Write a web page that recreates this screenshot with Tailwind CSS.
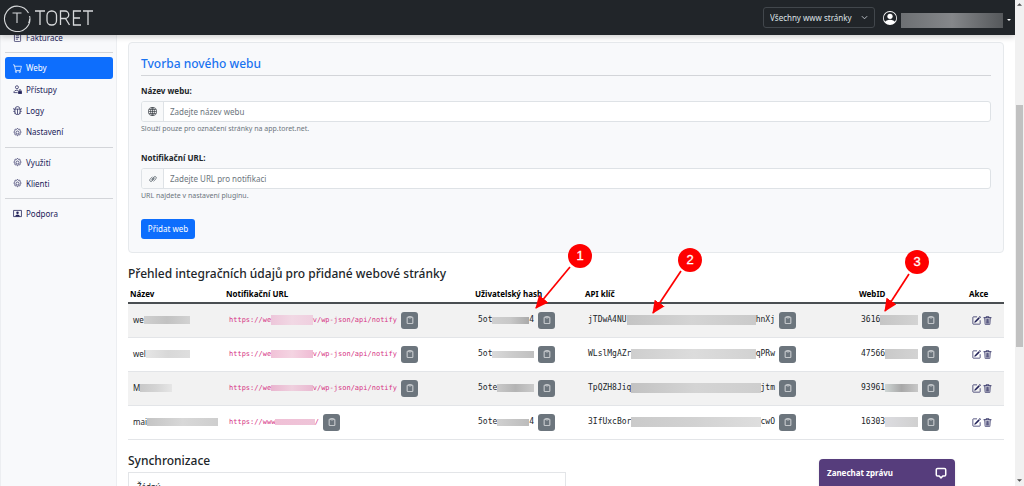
<!DOCTYPE html>
<html lang="cs">
<head>
<meta charset="utf-8">
<title>Toret – Weby</title>
<script src="https://cdn.jsdelivr.net/npm/@tailwindcss/browser@4"></script>
</head>
<body class="relative h-screen overflow-hidden bg-white font-['Noto_Sans','Open_Sans',sans-serif] text-[8px] leading-3 text-[#212529]">

<!-- Icon sprite -->
<svg class="hidden" aria-hidden="true">
  <symbol id="i-clip" viewBox="0 0 16 16"><path fill="none" stroke="currentColor" stroke-width="1.400" d="M4.500 2.300H3.300a1 1 0 0 0-1 1v11a1 1 0 0 0 1 1h9.400a1 1 0 0 0 1-1v-11a1 1 0 0 0-1-1h-1.200"/><rect x="5.200" y=".7" width="5.600" height="3" rx="1" fill="none" stroke="currentColor" stroke-width="1.400"/></symbol>
  <symbol id="i-edit" viewBox="0 0 16 16"><path fill="currentColor" d="M15.502 1.940a.5.5 0 0 1 0 .706L14.459 3.690l-2-2L13.502.646a.5.5 0 0 1 .707 0zm-1.750 2.456-2-2L4.939 9.210a.5.5 0 0 0-.121.196l-.805 2.414a.25.25 0 0 0 .316.316l2.414-.805a.5.5 0 0 0 .196-.120z"/><path fill="none" stroke="currentColor" stroke-width="1.300" d="M14.500 7.500v6a1 1 0 0 1-1 1h-11a1 1 0 0 1-1-1v-11a1 1 0 0 1 1-1H9"/></symbol>
  <symbol id="i-trash" viewBox="0 0 16 16"><path fill="none" stroke="currentColor" stroke-width="1.3" stroke-linecap="round" d="M1.500 3h13M5.500 3V1.200h5V3M3 3.200l.8 11.300c0 .5.400.9.900.9h6.600c.5 0 .9-.4.900-.9L13 3.200M5.700 5.500l.4 7.500M8 5.500V13M10.300 5.500 9.900 13"/></symbol>
  <symbol id="i-gear" viewBox="0 0 16 16"><g fill="none" stroke="currentColor" stroke-width="1.200"><circle cx="8" cy="8" r="2.700"/><path d="M6.900 1.500c.3-1.100 1.900-1.100 2.200 0l.1.400c.2.700 1 1 1.600.7l.4-.2c1-.5 2.100.6 1.600 1.600l-.2.4c-.3.600 0 1.400.7 1.600l.4.100c1.100.3 1.100 1.900 0 2.200l-.4.100c-.7.2-1 1-.7 1.600l.2.400c.5 1-.6 2.100-1.600 1.600l-.4-.2c-.6-.3-1.400 0-1.600.7l-.1.400c-.3 1.100-1.900 1.100-2.200 0l-.1-.4c-.2-.7-1-1-1.600-.7l-.4.200c-1 .5-2.100-.6-1.600-1.600l.2-.4c.3-.6 0-1.400-.7-1.600l-.4-.1c-1.100-.3-1.100-1.900 0-2.200l.4-.1c.7-.2 1-1 .7-1.600l-.2-.4c-.5-1 .6-2.100 1.600-1.600l.4.200c.6.300 1.400 0 1.600-.7z"/></g></symbol>
</svg>

<!-- Top bar -->
<header class="absolute left-0 right-[9px] top-0 z-20 flex h-[35px] items-center bg-[#212529] pl-[3px] shadow-[0_2px_6px_rgba(0,0,0,0.2)]">
  <a href="#" class="flex items-center gap-1" aria-label="Toret">
    <svg class="size-7" viewBox="0 0 28 28" fill="none" stroke="#d7d9db" stroke-width="1.1"><path d="M25.500 9A12.700 12.700 0 1 0 26.600 12M26.700 15A12.700 12.700 0 0 1 25.600 19"/><path d="M9.500 9h9M14 9v10"/></svg>
    <svg class="h-4 w-[60px]" viewBox="0 0 60 16" fill="none" stroke="#d7d9db" stroke-width="1.300"><path d="M0 1h10M5 1v14"/><rect x="12" y="1" width="9.500" height="14" rx="4.500"/><path d="M25.500 15V1h4.500a3.700 3.700 0 0 1 0 7.500h-4.500M30.500 8.500 34.500 15"/><path d="M46 1h-7.500v14H46M38.500 8H45"/><path d="M48 1h10M53 1v14"/></svg>
  </a>
  <div class="relative ml-auto mr-2 h-[21px] w-[112px]">
    <select aria-label="Výběr stránky" class="h-full w-full appearance-none rounded-[3px] border border-[#42474c] bg-[#212529] pl-1.5 text-[8px] text-[#dee2e6]"><option>Všechny www stránky</option></select>
    <svg class="pointer-events-none absolute right-[7px] top-[7px] size-[7px]" viewBox="0 0 16 16" fill="none" stroke="#ced4da" stroke-width="2"><path d="m2 5 6 6 6-6"/></svg>
  </div>
  <button class="flex items-center gap-1 pr-1" aria-label="Uživatel">
    <svg class="size-[14px]" viewBox="0 0 16 16" fill="#fff"><path d="M11 6a3 3 0 1 1-6 0 3 3 0 0 1 6 0"/><path fill-rule="evenodd" d="M0 8a8 8 0 1 1 16 0A8 8 0 0 1 0 8m8-7a7 7 0 0 0-5.468 11.370C3.242 11.226 4.805 10 8 10s4.757 1.225 5.468 2.370A7 7 0 0 0 8 1"/></svg>
    <span class="mt-1.5 h-[15px] w-[102px] bg-linear-to-r from-[#6d7073] via-[#85878a] to-[#55585b]"></span>
    <svg class="mt-1 h-[2px] w-[4px]" viewBox="0 0 6 3" fill="#fff"><path d="M0 0h6L3 3z"/></svg>
  </button>
</header>

<!-- Browser scrollbar -->
<div class="absolute inset-y-0 right-0 z-20 flex w-[9px] flex-col items-center bg-[#f1f1f1]">
  <svg class="mt-[3px] h-[3px] w-[5px]" viewBox="0 0 6 3" fill="#505050"><path d="M0 3h6L3 0z"/></svg>
  <div class="mt-[99px] h-[242px] w-[7px] bg-[#c1c1c1]"></div>
  <svg class="mb-1 mt-auto h-[3px] w-[5px]" viewBox="0 0 6 3" fill="#505050"><path d="M0 0h6L3 3z"/></svg>
</div>

<div class="flex h-full pr-5 pt-[27px]">
  <!-- Sidebar -->
  <nav class="flex w-[117px] shrink-0 flex-col border-x border-[#eceef1] bg-[#f8f9fb] pl-1 pr-[3px] text-[#212158]">
    <a href="#" class="flex h-[21px] items-center gap-1 pl-2"><svg class="size-[9px]" viewBox="0 0 16 16" fill="none" stroke="currentColor" stroke-width="1.300"><rect x="2.500" y=".7" width="11" height="14.600" rx="1.500"/><path d="M5 5h6M5 8h6M5 11h4"/></svg>Fakturace</a>
    <hr class="my-1 border-[#d3d5d9]">
    <a href="#" class="flex h-[22px] items-center gap-1 rounded-[3px] bg-[#0d6efd] pl-2 text-white"><svg class="size-[9px]" viewBox="0 0 16 16" fill="none" stroke="currentColor" stroke-width="1.300"><path d="M0 1.500h2.300L4.500 11.500h8.700L15 4H3"/><circle cx="5.500" cy="13.800" r="1.300"/><circle cx="12" cy="13.800" r="1.300"/></svg>Weby</a>
    <a href="#" class="flex h-[21px] items-center gap-1 pl-2"><svg class="size-[9px]" viewBox="0 0 16 16" fill="none" stroke="currentColor" stroke-width="1.300"><circle cx="7" cy="4" r="2.700"/><path d="M9 9.500C4 8.500 1.500 11 1.500 13.500H8"/><rect x="9.500" y="11" width="6" height="4.500" rx="1" fill="currentColor"/><path d="M11 11V9.500a1.500 1.500 0 0 1 3 0V11"/></svg>Přístupy</a>
    <a href="#" class="flex h-[21px] items-center gap-1 pl-2"><svg class="size-[9px]" viewBox="0 0 16 16" fill="none" stroke="currentColor" stroke-width="1.300"><path d="M3.500 5.500h9V11a4.500 4.500 0 0 1-9 0zM8 5.500V15M4 5a4 4 0 0 1 8 0M3.500 7 1.500 6V3.500M12.500 7l2-1V3.500M3.500 9.500H.5M12.500 9.500h3M4 12l-2 1M12 12l2 1"/></svg>Logy</a>
    <a href="#" class="flex h-[22px] items-center gap-1 pl-2"><svg class="size-[9px]"><use href="#i-gear"/></svg>Nastavení</a>
    <hr class="my-1 border-[#d3d5d9]">
    <a href="#" class="flex h-[21px] items-center gap-1 pl-2"><svg class="size-[9px]"><use href="#i-gear"/></svg>Využití</a>
    <a href="#" class="flex h-[21px] items-center gap-1 pl-2"><svg class="size-[9px]"><use href="#i-gear"/></svg>Klienti</a>
    <hr class="my-1 border-[#d3d5d9]">
    <a href="#" class="flex h-[21px] items-center gap-1 pl-2"><svg class="size-[9px]" viewBox="0 0 16 16" fill="currentColor"><path fill="none" stroke="currentColor" stroke-width="1.400" d="M1 2.500h14v11H1z"/><circle cx="8" cy="6.500" r="2.200"/><path d="M4 13.500c0-5 8-5 8 0z"/></svg>Podpora</a>
  </nav>

  <main class="ml-[11px] min-w-0 flex-1 pt-[15px]">
    <!-- New site form -->
    <form class="rounded-[4px] border border-[#e6e9ec] bg-[#f8f9fb] px-3 pb-[13px] pt-[13px]">
      <h2 class="border-b border-[#d3d5d9] pb-[3px] text-[12px] font-medium leading-4 text-[#1a73f0]">Tvorba nového webu</h2>
      <label for="name" class="mt-[9px] block font-bold">Název webu:</label>
      <div class="mt-1 flex h-[21px] overflow-hidden rounded-[3px] border border-[#dee2e6] bg-white">
        <span class="flex w-[22px] items-center justify-center border-r border-[#dee2e6] bg-[#f8f9fa]"><svg class="size-[9px]" viewBox="0 0 16 16" fill="none" stroke="#343a40" stroke-width="1.200"><circle cx="8" cy="8" r="7.300"/><ellipse cx="8" cy="8" rx="3.500" ry="7.300"/><path d="M8 .7v14.600M.7 8h14.600M1.700 4.500h12.600M1.700 11.500h12.600"/></svg></span>
        <input id="name" type="text" placeholder="Zadejte název webu" class="min-w-0 flex-1 px-1.5 text-[8px] placeholder:text-[#6c757d]">
      </div>
      <p class="mt-px text-[7px] text-[#6c757d]">Slouží pouze pro označení stránky na app.toret.net.</p>
      <label for="url" class="mt-[17px] block font-bold">Notifikační URL:</label>
      <div class="mt-1 flex h-[21px] overflow-hidden rounded-[3px] border border-[#dee2e6] bg-white">
        <span class="flex w-[22px] items-center justify-center border-r border-[#dee2e6] bg-[#f8f9fa]"><svg class="size-[8px]" viewBox="0 0 16 16" fill="none" stroke="#6c757d" stroke-width="1.800" stroke-linecap="round"><path d="M5.500 8.500 10 4a2.600 2.600 0 0 1 4 3.500L9.500 12M10.500 7.500 6 12a2.600 2.600 0 0 1-4-3.500L6.500 4M6 10l4-4"/></svg></span>
        <input id="url" type="text" placeholder="Zadejte URL pro notifikaci" class="min-w-0 flex-1 px-1.5 text-[8px] placeholder:text-[#6c757d]">
      </div>
      <p class="mt-px text-[7px] text-[#6c757d]">URL najdete v nastavení pluginu.</p>
      <button type="button" class="mt-[17px] block h-5 w-[54px] rounded-[3px] bg-[#0d6efd] text-white">Přidat web</button>
    </form>

    <h2 class="mt-[13px] text-[12px] font-medium leading-4">Přehled integračních údajů pro přidané webové stránky</h2>
    <table class="mt-[5px] w-full table-fixed border-collapse text-left">
      <colgroup><col class="w-[96px]"><col class="w-[249px]"><col class="w-[110px]"><col><col class="w-[110px]"><col class="w-[37px]"></colgroup>
      <thead>
        <tr class="h-4 border-b-2 border-[#4a4e52] text-black"><th class="pb-0.5 pl-0.5">Název</th><th class="pb-0.5 pl-0.5">Notifikační URL</th><th class="pb-0.5 pl-0.5">Uživatelský hash</th><th class="pb-0.5 pl-0.5">API klíč</th><th class="pb-0.5 pl-0.5">WebID</th><th class="pb-0.5 pl-0.5">Akce</th></tr>
      </thead>
      <tbody>
        <tr class="h-[34px] border-b border-[#e3e5e8] bg-[#f2f2f2]">
          <td class="pl-[5px]"><div class="flex items-center">we<span class="h-2 w-[46px] bg-linear-to-r from-[#cfcfcf] via-[#c2c2c2] to-[#d2d2d2]"></span></div></td>
          <td class="pl-[5px]"><div class="flex items-center gap-1"><code class="flex w-[168px] items-center font-['DejaVu_Sans_Mono',monospace] text-[7px] text-[#d63384]">https://we<span class="h-[10px] flex-1 bg-linear-to-r from-[#edc6da] via-[#f1d8e4] to-[#efcfdf]"></span>v/wp-json/api/notify</code><button class="grid size-[17px] place-items-center rounded-[3px] bg-[#6c757d] text-white" aria-label="Kopírovat URL"><svg class="size-2"><use href="#i-clip"/></svg></button></div></td>
          <td class="pl-[5px]"><div class="flex items-center gap-1"><code class="flex w-[56px] items-center font-['DejaVu_Sans_Mono',monospace] text-[8px]">5ot<span class="h-[7px] flex-1 bg-linear-to-r from-[#d0d0d0] via-[#c8c8c8] to-[#aaa]"></span>4</code><button class="grid size-[17px] place-items-center rounded-[3px] bg-[#6c757d] text-white" aria-label="Kopírovat hash"><svg class="size-2"><use href="#i-clip"/></svg></button></div></td>
          <td class="pl-[5px]"><div class="flex items-center gap-1"><code class="flex w-[187px] items-center font-['DejaVu_Sans_Mono',monospace] text-[8px]">jTDwA4NU<span class="h-[10px] flex-1 bg-linear-to-r from-[#c4c4c4] via-[#d4d4d4] to-[#cacaca]"></span>hnXj</code><button class="grid size-[17px] place-items-center rounded-[3px] bg-[#6c757d] text-white" aria-label="Kopírovat klíč"><svg class="size-2"><use href="#i-clip"/></svg></button></div></td>
          <td class="pl-1"><div class="flex items-center gap-1"><code class="flex w-[57px] items-center font-['DejaVu_Sans_Mono',monospace] text-[8px]">3616<span class="h-[10px] flex-1 bg-linear-to-r from-[#c5c5c5] to-[#d3d3d3]"></span></code><button class="grid size-[17px] place-items-center rounded-[3px] bg-[#6c757d] text-white" aria-label="Kopírovat WebID"><svg class="size-2"><use href="#i-clip"/></svg></button></div></td>
          <td class="pl-[5px]"><div class="flex gap-0.5 text-[#212158]"><button aria-label="Upravit"><svg class="size-[9px]"><use href="#i-edit"/></svg></button><button aria-label="Smazat"><svg class="size-[9px]"><use href="#i-trash"/></svg></button></div></td>
        </tr>
        <tr class="h-[34px] border-b border-[#e3e5e8]">
          <td class="pl-[5px]"><div class="flex items-center">wel<span class="h-2 w-[44px] bg-linear-to-r from-[#e6e6e6] via-[#d8d8d8] to-[#dedede]"></span></div></td>
          <td class="pl-[5px]"><div class="flex items-center gap-1"><code class="flex w-[168px] items-center font-['DejaVu_Sans_Mono',monospace] text-[7px] text-[#d63384]">https://we<span class="h-2 flex-1 bg-linear-to-r from-[#f1c2d8] via-[#f4d4e2] to-[#efbbd4]"></span>v/wp-json/api/notify</code><button class="grid size-[17px] place-items-center rounded-[3px] bg-[#6c757d] text-white" aria-label="Kopírovat URL"><svg class="size-2"><use href="#i-clip"/></svg></button></div></td>
          <td class="pl-[5px]"><div class="flex items-center gap-1"><code class="flex w-[56px] items-center font-['DejaVu_Sans_Mono',monospace] text-[8px]">5ot<span class="h-[7px] flex-1 bg-linear-to-r from-[#dadada] via-[#cbcbcb] to-[#c0c0c0]"></span></code><button class="grid size-[17px] place-items-center rounded-[3px] bg-[#6c757d] text-white" aria-label="Kopírovat hash"><svg class="size-2"><use href="#i-clip"/></svg></button></div></td>
          <td class="pl-[5px]"><div class="flex items-center gap-1"><code class="flex w-[187px] items-center font-['DejaVu_Sans_Mono',monospace] text-[8px]">WLslMgAZr<span class="h-[10px] flex-1 bg-linear-to-r from-[#cecece] via-[#dcdcdc] to-[#d2d2d2]"></span>qPRw</code><button class="grid size-[17px] place-items-center rounded-[3px] bg-[#6c757d] text-white" aria-label="Kopírovat klíč"><svg class="size-2"><use href="#i-clip"/></svg></button></div></td>
          <td class="pl-1"><div class="flex items-center gap-1"><code class="flex w-[57px] items-center font-['DejaVu_Sans_Mono',monospace] text-[8px]">47566<span class="h-[10px] flex-1 bg-linear-to-r from-[#c9c9c9] to-[#d3d3d3]"></span></code><button class="grid size-[17px] place-items-center rounded-[3px] bg-[#6c757d] text-white" aria-label="Kopírovat WebID"><svg class="size-2"><use href="#i-clip"/></svg></button></div></td>
          <td class="pl-[5px]"><div class="flex gap-0.5 text-[#212158]"><button aria-label="Upravit"><svg class="size-[9px]"><use href="#i-edit"/></svg></button><button aria-label="Smazat"><svg class="size-[9px]"><use href="#i-trash"/></svg></button></div></td>
        </tr>
        <tr class="h-[34px] border-b border-[#e3e5e8] bg-[#f2f2f2]">
          <td class="pl-[5px]"><div class="flex items-center">M<span class="h-2 w-[32px] bg-linear-to-r from-[#c8c8c8] via-[#d4d4d4] to-[#e6e6e6]"></span></div></td>
          <td class="pl-[5px]"><div class="flex items-center gap-1"><code class="flex w-[168px] items-center font-['DejaVu_Sans_Mono',monospace] text-[7px] text-[#d63384]">https://we<span class="h-[6px] flex-1 bg-linear-to-r from-[#e9b5cf] via-[#efd0de] to-[#e9b9d1]"></span>v/wp-json/api/notify</code><button class="grid size-[17px] place-items-center rounded-[3px] bg-[#6c757d] text-white" aria-label="Kopírovat URL"><svg class="size-2"><use href="#i-clip"/></svg></button></div></td>
          <td class="pl-[5px]"><div class="flex items-center gap-1"><code class="flex w-[56px] items-center font-['DejaVu_Sans_Mono',monospace] text-[8px]">5ote<span class="h-2 flex-1 bg-linear-to-r from-[#c9c9c9] via-[#b4b4b4] to-[#cbcbcb]"></span></code><button class="grid size-[17px] place-items-center rounded-[3px] bg-[#6c757d] text-white" aria-label="Kopírovat hash"><svg class="size-2"><use href="#i-clip"/></svg></button></div></td>
          <td class="pl-[5px]"><div class="flex items-center gap-1"><code class="flex w-[187px] items-center font-['DejaVu_Sans_Mono',monospace] text-[8px]">TpQZH8Jiq<span class="h-[10px] flex-1 bg-linear-to-r from-[#c2c2c2] via-[#d4d4d4] to-[#cecece]"></span>jtm</code><button class="grid size-[17px] place-items-center rounded-[3px] bg-[#6c757d] text-white" aria-label="Kopírovat klíč"><svg class="size-2"><use href="#i-clip"/></svg></button></div></td>
          <td class="pl-1"><div class="flex items-center gap-1"><code class="flex w-[57px] items-center font-['DejaVu_Sans_Mono',monospace] text-[8px]">93961<span class="h-2 flex-1 bg-linear-to-r from-[#cfd6d5] via-[#a8a8a8] to-[#c8c8c8]"></span></code><button class="grid size-[17px] place-items-center rounded-[3px] bg-[#6c757d] text-white" aria-label="Kopírovat WebID"><svg class="size-2"><use href="#i-clip"/></svg></button></div></td>
          <td class="pl-[5px]"><div class="flex gap-0.5 text-[#212158]"><button aria-label="Upravit"><svg class="size-[9px]"><use href="#i-edit"/></svg></button><button aria-label="Smazat"><svg class="size-[9px]"><use href="#i-trash"/></svg></button></div></td>
        </tr>
        <tr class="h-[34px] border-b border-[#e3e5e8]">
          <td class="pl-[5px]"><div class="flex items-center">mai<span class="h-2 w-[71px] shrink-0 bg-linear-to-r from-[#c4c4c4] via-[#d8d8d8] to-[#cecece]"></span></div></td>
          <td class="pl-[5px]"><div class="flex items-center gap-1"><code class="flex w-[90px] items-center font-['DejaVu_Sans_Mono',monospace] text-[7px] text-[#d63384]">https://www<span class="h-[6px] flex-1 bg-linear-to-r from-[#f0c0d6] to-[#eec4d8]"></span>/</code><button class="grid size-[17px] place-items-center rounded-[3px] bg-[#6c757d] text-white" aria-label="Kopírovat URL"><svg class="size-2"><use href="#i-clip"/></svg></button></div></td>
          <td class="pl-[5px]"><div class="flex items-center gap-1"><code class="flex w-[56px] items-center font-['DejaVu_Sans_Mono',monospace] text-[8px]">5ote<span class="h-[7px] flex-1 bg-linear-to-r from-[#d0d0d0] to-[#bcbcbc]"></span>4</code><button class="grid size-[17px] place-items-center rounded-[3px] bg-[#6c757d] text-white" aria-label="Kopírovat hash"><svg class="size-2"><use href="#i-clip"/></svg></button></div></td>
          <td class="pl-[5px]"><div class="flex items-center gap-1"><code class="flex w-[187px] items-center font-['DejaVu_Sans_Mono',monospace] text-[8px]">3IfUxcBor<span class="h-[10px] flex-1 bg-linear-to-r from-[#cacaca] via-[#d2d2d2] to-[#dedede]"></span>cwO</code><button class="grid size-[17px] place-items-center rounded-[3px] bg-[#6c757d] text-white" aria-label="Kopírovat klíč"><svg class="size-2"><use href="#i-clip"/></svg></button></div></td>
          <td class="pl-1"><div class="flex items-center gap-1"><code class="flex w-[57px] items-center font-['DejaVu_Sans_Mono',monospace] text-[8px]">16303<span class="h-[10px] flex-1 bg-linear-to-r from-[#dcdce0] to-[#d0d0d0]"></span></code><button class="grid size-[17px] place-items-center rounded-[3px] bg-[#6c757d] text-white" aria-label="Kopírovat WebID"><svg class="size-2"><use href="#i-clip"/></svg></button></div></td>
          <td class="pl-[5px]"><div class="flex gap-0.5 text-[#212158]"><button aria-label="Upravit"><svg class="size-[9px]"><use href="#i-edit"/></svg></button><button aria-label="Smazat"><svg class="size-[9px]"><use href="#i-trash"/></svg></button></div></td>
        </tr>
      </tbody>
    </table>

    <h2 class="mt-[13px] text-[12px] font-medium leading-4">Synchronizace</h2>
    <div class="mt-[3px] w-1/2 border border-[#e3e5e8] px-2 pb-4 pt-2">Žádný</div>
  </main>
</div>

<!-- Numbered callouts -->
<svg class="pointer-events-none absolute left-0 top-0 z-10 h-[486px] w-[1024px]" viewBox="0 0 1024 486" fill="#fe0000">
  <defs><marker id="tip" markerUnits="userSpaceOnUse" markerWidth="14" markerHeight="12" refX="12" refY="6" orient="auto"><path d="M0 0 13 6 0 12z"/></marker></defs>
  <g stroke="#fe0000" stroke-width="1.700"><path marker-end="url(#tip)" d="M570 267 536 308"/><path marker-end="url(#tip)" d="M681 271 653 313"/><path marker-end="url(#tip)" d="M909 274 885 311"/></g>
  <circle cx="580" cy="256" r="12"/><circle cx="690" cy="260" r="12"/><circle cx="917" cy="262" r="12"/>
  <g fill="#fff" stroke="#fff" stroke-width=".3" text-anchor="middle" class="font-['Liberation_Sans',sans-serif] text-[13px]"><text x="580" y="260">1</text><text x="690" y="264">2</text><text x="917" y="266">3</text></g>
</svg>

<!-- Chat launcher -->
<button class="absolute bottom-0 right-[69px] z-10 flex h-[27px] w-[136px] items-center justify-between rounded-t-[4px] bg-[#563d7c] px-2 font-bold text-white shadow">Zanechat zprávu
  <svg class="size-3" viewBox="0 0 16 16" fill="none" stroke="#fff" stroke-width="2"><path d="M3.500 2h9A1.800 1.800 0 0 1 14.300 3.800v6.400a1.800 1.800 0 0 1-1.800 1.800H10.500L8 14.500 5.500 12h-2a1.800 1.800 0 0 1-1.800-1.800V3.800A1.800 1.800 0 0 1 3.500 2z"/></svg>
</button>
</body>
</html>
